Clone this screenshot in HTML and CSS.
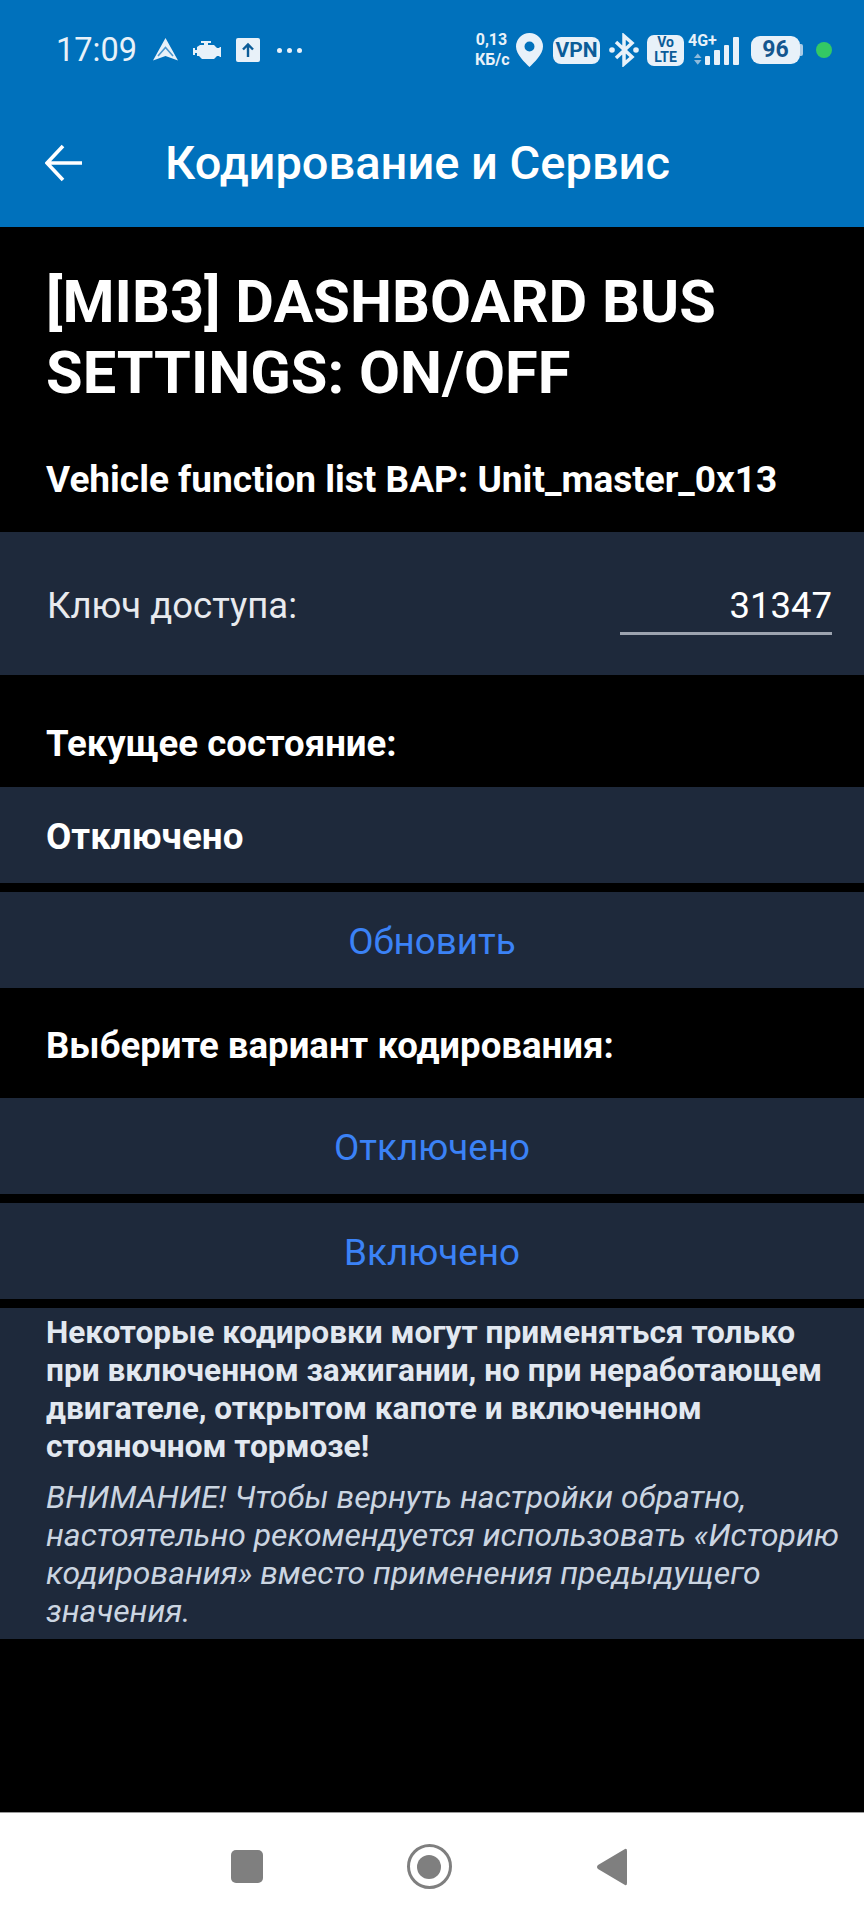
FILE: index.html
```html
<!DOCTYPE html>
<html>
<head>
  <title>Кодирование и Сервис</title>
  <link rel="stylesheet" href="styles.css">
</head>
<body>
  <header class="topbar">
    <div class="status-bar">
      <div class="status-left">
        <span class="clock">17:09</span>
        <svg class="ic-nav" width="25" height="24" viewBox="0 0 25 24"><path d="M12.500 0 L25 22.500 L12.500 18 L0 22.500 Z" fill="#e8f1f9"/><path d="M5 18 L12.500 9.500 L20 18" fill="none" stroke="#4b97cf" stroke-width="1.600"/></svg>
        <svg class="ic-engine" width="28" height="18" viewBox="0 0 28 18"><path d="M8 0h10v2h-3v2h6l3 3h2l1-1h1v10h-1l-1-1h-2l-3 3H9l-3-3H4v-3H2v2H0V7h2v2h2V6l3-2h4V2H8z" fill="#e8f1f9"/></svg>
        <svg class="ic-up" width="24" height="24" viewBox="0 0 24 24"><rect width="24" height="24" rx="2" fill="#e8f1f9"/><path d="M12 19V7 M7 11.500 L12 6.500 L17 11.500" fill="none" stroke="#0b5c98" stroke-width="2.400"/></svg>
        <span class="dots"><i></i><i></i><i></i></span>
      </div>
      <div class="status-right">
        <span class="speed">0,13<br>КБ/с</span>
        <svg class="ic-pin" width="27" height="34" viewBox="0 0 27 34"><path fill-rule="evenodd" d="M13.500 0A13.500 13.500 0 0 1 27 13.500C27 21.500 18 29.500 13.500 34 9 29.500 0 21.500 0 13.500A13.500 13.500 0 0 1 13.500 0zm0 8.500a5 5 0 1 0 0 10 5 5 0 0 0 0-10z" fill="#e8f1f9"/></svg>
        <span class="pill vpn">VPN</span>
        <svg class="ic-bt" width="30" height="34" viewBox="0 0 30 34"><path d="M7 9 L23 24 L15 31 V3 L23 10 L7 25" fill="none" stroke="#e8f1f9" stroke-width="3.500"/><circle cx="3" cy="17" r="2.800" fill="#e8f1f9"/><circle cx="27" cy="17" r="2.800" fill="#e8f1f9"/></svg>
        <span class="pill volte">Vo<br>LTE</span>
        <div class="signal">
          <span class="net">4G+</span>
          <svg class="arrows" width="8" height="12" viewBox="0 0 8 12"><path d="M4 0 L8 5 H0 Z" fill="#8fbbdc"/><path d="M4 12 L8 7 H0 Z" fill="#8fbbdc"/></svg>
          <span class="bar b1"></span><span class="bar b2"></span><span class="bar b3"></span><span class="bar b4"></span>
        </div>
        <span class="battery">96</span>
        <span class="cam-dot"></span>
      </div>
    </div>
    <div class="toolbar">
      <svg class="back" width="38" height="38" viewBox="0 0 38 38"><path d="M37 19 H3 M18 2 L2 19 L18 36" fill="none" stroke="#fff" stroke-width="3.600"/></svg>
      <h2 class="screen-title">Кодирование и Сервис</h2>
    </div>
  </header>

  <main class="content">
    <h1 class="page-title">[MIB3] DASHBOARD BUS SETTINGS: ON/OFF</h1>
    <p class="subtitle">Vehicle function list BAP: Unit_master_0x13</p>

    <div class="panel key-row">
      <span class="key-label">Ключ доступа:</span>
      <span class="key-input">31347</span>
    </div>

    <p class="section-label first">Текущее состояние:</p>
    <div class="panel state-row">Отключено</div>
    <div class="panel btn">Обновить</div>

    <p class="section-label">Выберите вариант кодирования:</p>
    <div class="panel btn">Отключено</div>
    <div class="panel btn">Включено</div>

    <div class="panel note">
      <p class="note-bold">Некоторые кодировки могут применяться только при включенном зажигании, но при неработающем двигателе, открытом капоте и включенном стояночном тормозе!</p>
      <p class="note-warn">ВНИМАНИЕ! Чтобы вернуть настройки обратно, настоятельно рекомендуется использовать «Историю кодирования» вместо применения предыдущего значения.</p>
    </div>
  </main>

  <nav class="navbar">
    <span class="nav-square"></span>
    <span class="nav-circle"><i></i></span>
    <svg width="32" height="38" viewBox="0 0 32 38"><path d="M29 1 Q31 0 31 3 V35 Q31 38 29 37 L2 21 Q0 19 2 17 Z" fill="#7f7f7f"/></svg>
  </nav>
</body>
</html>
```

FILE: styles.css
```css
* {
  box-sizing: border-box;
}
body {
  margin: 0;
  width: 864px;
  height: 1920px;
  display: flex;
  flex-direction: column;
  background: #000;
  color: #fff;
  font-family: Roboto, "Noto Sans", sans-serif;
  overflow: hidden;
}
.topbar {
  height: 227px;
  background: #0071bc;
  flex-shrink: 0;
}
.status-bar {
  height: 100px;
  display: flex;
  justify-content: space-between;
  align-items: center;
  padding: 0 32px 0 56px;
}
.status-left, .status-right {
  display: flex;
  align-items: center;
}
.clock {
  width: 81px;
  font-size: 32.500px;
  color: #e8f1f9;
}
.ic-nav {
  margin-left: 16px;
}
.ic-engine {
  margin-left: 15px;
}
.ic-up {
  margin-left: 15px;
}
.dots {
  display: flex;
  gap: 5px;
  margin-left: 17px;
}
.dots i {
  width: 5px;
  height: 5px;
  border-radius: 50%;
  background: #e8f1f9;
}
.speed {
  width: 33px;
  font-size: 16px;
  font-weight: 700;
  line-height: 20px;
  text-align: center;
  color: #e8f1f9;
  white-space: nowrap;
}
.ic-pin {
  margin-left: 8px;
}
.pill {
  background: #e8f1f9;
  color: #0b5c98;
  font-weight: 700;
  text-align: center;
}
.vpn {
  width: 47px;
  height: 27px;
  margin-left: 10px;
  border-radius: 8px;
  font-size: 21px;
  line-height: 27px;
}
.ic-bt {
  margin-left: 9px;
}
.volte {
  width: 37px;
  height: 31px;
  margin-left: 8px;
  border-radius: 7px;
  font-size: 14px;
  line-height: 15px;
}
.signal {
  position: relative;
  width: 51px;
  height: 30px;
  margin-left: 4px;
  display: flex;
  align-items: flex-end;
  gap: 4px;
}
.net {
  position: absolute;
  left: 0;
  top: -2px;
  font-size: 16px;
  line-height: 16px;
  font-weight: 700;
  color: #e8f1f9;
}
.arrows {
  margin-left: 6px;
  margin-right: -1px;
}
.bar {
  width: 6px;
  background: #e8f1f9;
  border-radius: 1px;
}
.b1 { height: 9px; }
.b2 { height: 15px; }
.b3 { height: 20px; }
.b4 { height: 28px; }
.battery {
  position: relative;
  width: 49px;
  height: 28px;
  margin-left: 12px;
  margin-right: 16px;
  border-radius: 9px;
  background: #e8f1f9;
  color: #14568f;
  font-size: 23px;
  font-weight: 700;
  line-height: 28px;
  text-align: center;
}
.battery::after {
  content: "";
  position: absolute;
  left: 49px;
  top: 8px;
  width: 3px;
  height: 12px;
  background: #a9cbe6;
  border-radius: 0 2px 2px 0;
}
.cam-dot {
  width: 16px;
  height: 16px;
  border-radius: 50%;
  background: #34c964;
}
.toolbar {
  height: 127px;
  display: flex;
  align-items: center;
  padding: 0 0 2px 45px;
}
.screen-title {
  margin: 0 0 0 82px;
  font-size: 47px;
  font-weight: 500;
  white-space: nowrap;
}
.content {
  flex: 1;
}
.page-title {
  margin: 0;
  padding: 40px 46px 0;
  font-size: 59.500px;
  font-weight: 700;
  line-height: 71px;
}
.subtitle {
  margin: 0;
  padding: 48px 46px 0;
  height: 123px;
  font-size: 37px;
  font-weight: 700;
  line-height: 46px;
  white-space: nowrap;
}
.panel {
  background: #1e293b;
}
.key-row {
  height: 143px;
  display: flex;
  justify-content: space-between;
  align-items: flex-end;
  padding: 0 32px 40px 47px;
  font-size: 36.500px;
  line-height: 44px;
}
.key-label {
  padding-bottom: 7px;
  color: #e8eaee;
}
.key-input {
  width: 212px;
  padding-bottom: 4px;
  border-bottom: 3px solid #9ca3af;
  text-align: right;
}
.section-label {
  margin: 0;
  padding: 0 46px 5px;
  height: 101px;
  display: flex;
  align-items: center;
  font-size: 36.600px;
  font-weight: 700;
}
.section-label.first {
  height: 112px;
  padding-top: 24px;
  padding-bottom: 0;
}
.state-row {
  height: 96px;
  margin-bottom: 9px;
  padding: 2px 46px 0;
  display: flex;
  align-items: center;
  font-size: 36.800px;
  font-weight: 700;
}
.btn {
  height: 96px;
  margin-bottom: 9px;
  padding-top: 2px;
  display: flex;
  align-items: center;
  justify-content: center;
  font-size: 36.800px;
  color: #3b82f6;
}
.note {
  height: 331px;
  padding: 6px 12px 0 46px;
  color: #e2e8f0;
}
.note p {
  margin: 0;
}
.note-bold {
  padding-right: 20px;
  font-size: 31.600px;
  font-weight: 700;
  line-height: 38px;
}
.note-warn {
  padding-top: 12px;
  font-size: 31.900px;
  font-style: italic;
  line-height: 38px;
  color: #cbd5e1;
}
.navbar {
  height: 108px;
  flex-shrink: 0;
  background: #fff;
  border-top: 1px solid #999;
  display: flex;
  align-items: center;
  justify-content: center;
  gap: 144px;
  padding-right: 6px;
}
.nav-square {
  width: 32px;
  height: 33px;
  border-radius: 5px;
  background: #7f7f7f;
}
.nav-circle {
  width: 45px;
  height: 45px;
  border-radius: 50%;
  border: 3px solid #7f7f7f;
  display: flex;
  align-items: center;
  justify-content: center;
}
.nav-circle i {
  width: 24px;
  height: 24px;
  border-radius: 50%;
  background: #7f7f7f;
}
```
